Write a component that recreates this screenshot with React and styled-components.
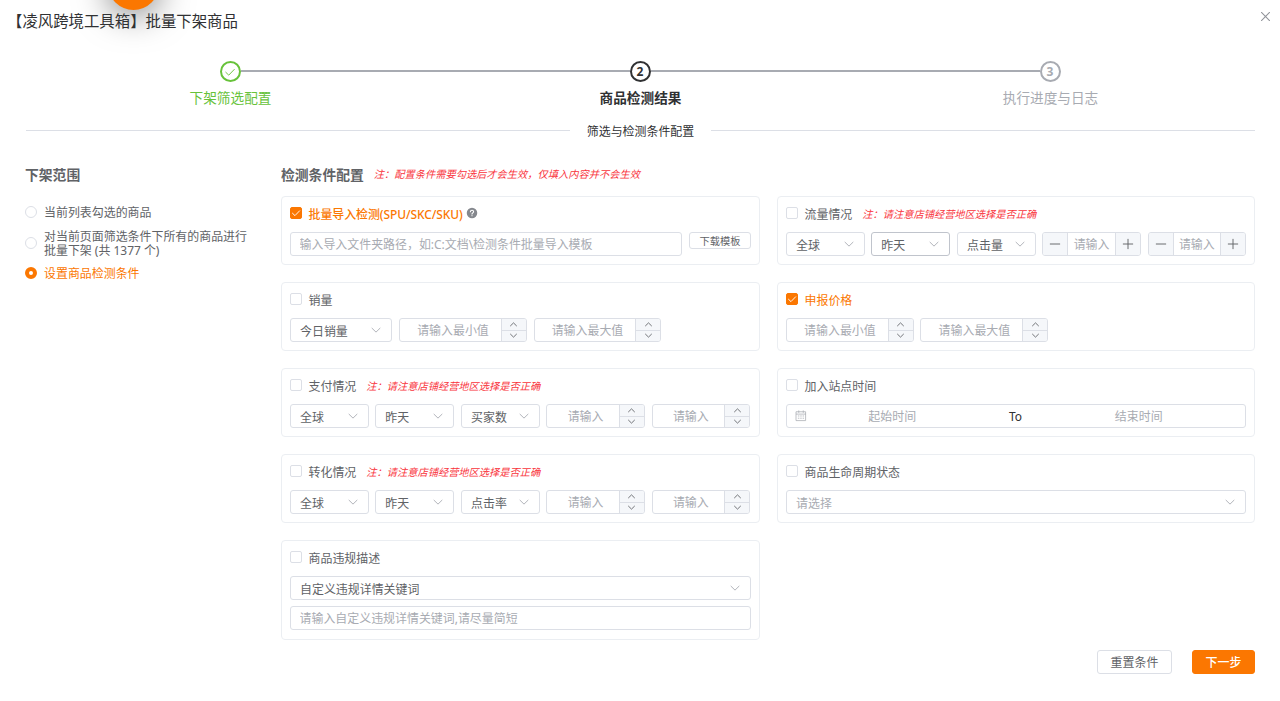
import React from 'react';
import styled, { createGlobalStyle } from 'styled-components';

const hint = '注：请注意店铺经营地区选择是否正确';

const scopes = [
  { label: '当前列表勾选的商品' },
  { label: '对当前页面筛选条件下所有的商品进行批量下架 (共 1377 个)' },
  { label: '设置商品检测条件', checked: true },
];

const Icon = ({ size = 12, width = 76, children }) => (
  <svg
    width={size}
    height={size}
    viewBox="0 0 1024 1024"
    fill="none"
    stroke="currentColor"
    strokeWidth={width}
    strokeLinecap="round"
    strokeLinejoin="round"
  >
    {children}
  </svg>
);

const ArrowDown = props => (
  <Icon {...props}>
    <path d="M171 362 512 694 853 362" />
  </Icon>
);

const ArrowUp = props => (
  <Icon {...props}>
    <path d="M171 662 512 330 853 662" />
  </Icon>
);

const Minus = () => (
  <Icon size={12} width={80}>
    <path d="M110 512H914" />
  </Icon>
);

const Plus = () => (
  <Icon size={12} width={80}>
    <path d="M110 512H914M512 110V914" />
  </Icon>
);

const Check = props => (
  <Icon {...props}>
    <path d="M150 535 406 780 880 290" />
  </Icon>
);

const Close = () => (
  <Icon size={13} width={80}>
    <path d="M195 195 829 829M829 195 195 829" />
  </Icon>
);

const Calendar = () => (
  <Icon size={12} width={64}>
    <path d="M120 150H904V904H120ZM120 350H904M320 70V210M704 70V210" />
    <path d="M280 510H340M480 510H540M680 510H740M280 700H340M480 700H540M680 700H740" />
  </Icon>
);

const Question = () => (
  <Icon size={12} width={95}>
    <circle cx="512" cy="512" r="448" fill="currentColor" stroke="none" />
    <path
      stroke="#fff"
      d="M375 405C385 235 650 240 648 405C646 500 512 500 512 605M512 735V742"
    />
  </Icon>
);

const Select = ({ value, placeholder, width, active }) => (
  <SelectBox $width={width} $active={active}>
    <SelectText $muted={!value}>{value || placeholder}</SelectText>
    <ArrowDown />
  </SelectBox>
);

const NumberInput = ({ placeholder, width }) => (
  <NumberBox $width={width}>
    <NumberField placeholder={placeholder} $shift />
    <Spinner>
      <SpinButton type="button">
        <ArrowUp size={9} width={100} />
      </SpinButton>
      <SpinButton type="button">
        <ArrowDown size={9} width={100} />
      </SpinButton>
    </Spinner>
  </NumberBox>
);

const StepInput = ({ placeholder, width }) => (
  <NumberBox $width={width}>
    <StepButton type="button">
      <Minus />
    </StepButton>
    <NumberField placeholder={placeholder} />
    <StepButton type="button" $end>
      <Plus />
    </StepButton>
  </NumberBox>
);

const Condition = ({ title, checked, strong, note, help, children }) => (
  <Card>
    <CardHead>
      <Checkbox $checked={checked}>
        {checked && <Check size={10} width={95} />}
      </Checkbox>
      <CardTitle $checked={checked} $strong={strong}>
        {title}
      </CardTitle>
      {help && (
        <Help>
          <Question />
        </Help>
      )}
      {note && <Note $left={10}>{note}</Note>}
    </CardHead>
    {children}
  </Card>
);

const App = () => {
  return (
    <Dialog>
      <GlobalStyle />
      <FloatBall />
      <Header>
        <h1>【凌风跨境工具箱】批量下架商品</h1>
        <CloseButton type="button">
          <Close />
        </CloseButton>
      </Header>

      <Steps>
        <Step $color="#67c23a">
          <StepHead>
            <StepLine $hidden />
            <StepIcon>
              <Check size={12} width={80} />
            </StepIcon>
            <StepLine />
          </StepHead>
          <StepTitle>下架筛选配置</StepTitle>
        </Step>
        <Step $color="#303133">
          <StepHead>
            <StepLine />
            <StepIcon>2</StepIcon>
            <StepLine />
          </StepHead>
          <StepTitle $bold>商品检测结果</StepTitle>
        </Step>
        <Step $color="#a8abb2">
          <StepHead>
            <StepLine />
            <StepIcon>3</StepIcon>
            <StepLine $hidden />
          </StepHead>
          <StepTitle>执行进度与日志</StepTitle>
        </Step>
      </Steps>

      <Divider>
        <span>筛选与检测条件配置</span>
      </Divider>

      <Body>
        <Scope>
          <Heading>下架范围</Heading>
          <ScopeList>
            {scopes.map(({ label, checked }) => (
              <ScopeItem key={label} $checked={checked}>
                <Radio $checked={checked} />
                <span>{label}</span>
              </ScopeItem>
            ))}
          </ScopeList>
        </Scope>

        <Conditions>
          <HeadingRow>
            <Heading>检测条件配置</Heading>
            <Note $left={10}>
              注：配置条件需要勾选后才会生效，仅填入内容并不会生效
            </Note>
          </HeadingRow>
          <Grid>
            <Condition title="批量导入检测(SPU/SKC/SKU)" checked strong help>
              <Controls>
                <TextInput placeholder="输入导入文件夹路径，如:C:文档\检测条件批量导入模板" />
                <SmallButton type="button">下载模板</SmallButton>
              </Controls>
            </Condition>
            <Condition title="流量情况" note={hint}>
              <Controls>
                <Select value="全球" width={78.5} />
                <Select value="昨天" width={79.2} active />
                <Select value="点击量" width={78.5} />
                <StepInput placeholder="请输入" width={98.6} />
                <StepInput placeholder="请输入" width={98.6} />
              </Controls>
            </Condition>
            <Condition title="销量">
              <Controls>
                <Select value="今日销量" width={102.4} />
                <NumberInput placeholder="请输入最小值" width={127.8} />
                <NumberInput placeholder="请输入最大值" width={127.8} />
              </Controls>
            </Condition>
            <Condition title="申报价格" checked>
              <Controls>
                <NumberInput placeholder="请输入最小值" width={127.8} />
                <NumberInput placeholder="请输入最大值" width={127.8} />
              </Controls>
            </Condition>
            <Condition title="支付情况" note={hint}>
              <Controls>
                <Select value="全球" width={78.5} />
                <Select value="昨天" width={79.2} />
                <Select value="买家数" width={78.5} />
                <NumberInput placeholder="请输入" width={98.6} />
                <NumberInput placeholder="请输入" width={98.6} />
              </Controls>
            </Condition>
            <Condition title="加入站点时间">
              <DateRange>
                <Calendar />
                <DateField placeholder="起始时间" />
                <span>To</span>
                <DateField placeholder="结束时间" />
              </DateRange>
            </Condition>
            <Condition title="转化情况" note={hint}>
              <Controls>
                <Select value="全球" width={78.5} />
                <Select value="昨天" width={79.2} />
                <Select value="点击率" width={78.5} />
                <NumberInput placeholder="请输入" width={98.6} />
                <NumberInput placeholder="请输入" width={98.6} />
              </Controls>
            </Condition>
            <Condition title="商品生命周期状态">
              <Select placeholder="请选择" />
            </Condition>
            <Condition title="商品违规描述">
              <Stack>
                <Select value="自定义违规详情关键词" />
                <TextInput placeholder="请输入自定义违规详情关键词,请尽量简短" />
              </Stack>
            </Condition>
          </Grid>
        </Conditions>
      </Body>

      <Footer>
        <Button type="button" $width={75}>
          重置条件
        </Button>
        <Button type="button" $width={63} $primary>
          下一步
        </Button>
      </Footer>
    </Dialog>
  );
};

const GlobalStyle = createGlobalStyle`
  * {
    box-sizing: border-box;
  }
  body {
    margin: 0;
    background: #fff;
    overflow: hidden;
  }
  body,
  button,
  input {
    font-family: 'Noto Sans', 'Noto Sans CJK SC', sans-serif;
    font-size: 11.94px;
    color: #606266;
  }
  button {
    padding: 0;
    cursor: pointer;
  }
  input {
    min-width: 0;
    padding: 0;
    border: none;
    outline: none;
    background: transparent;
  }
  input::placeholder {
    color: #a8abb2;
    opacity: 1;
  }
  svg {
    display: block;
    flex-shrink: 0;
  }
`;

const Dialog = styled.div`
  position: relative;
  width: 1280px;
  height: 701px;
  overflow: hidden;
`;

const FloatBall = styled.div`
  position: absolute;
  top: -41px;
  left: 108px;
  width: 51px;
  height: 51px;
  border-radius: 50%;
  background: #fb7701;
  box-shadow: 0 5px 34px rgba(0, 0, 0, 0.5);
`;

const Header = styled.header`
  position: relative;
  display: flex;
  justify-content: space-between;
  height: 61px;
  padding: 10px 8px 0 7px;
  h1 {
    margin: 1px 0 0;
    font-size: 15.4px;
    font-weight: 400;
    line-height: 21px;
    color: #303133;
  }
`;

const CloseButton = styled.button`
  height: 13px;
  border: none;
  background: transparent;
  color: #909399;
`;

const Steps = styled.div`
  display: flex;
  height: 59px;
  padding: 0 25px;
`;

const Step = styled.div`
  flex: 1;
  color: ${({ $color }) => $color};
`;

const StepHead = styled.div`
  display: flex;
  align-items: center;
  height: 21px;
`;

const StepLine = styled.div`
  flex: 1;
  height: 2px;
  margin-bottom: 1px;
  background: ${({ $hidden }) => ($hidden ? 'transparent' : '#a8abb2')};
`;

const StepIcon = styled.div`
  display: flex;
  align-items: center;
  justify-content: center;
  width: 21px;
  height: 21px;
  border: 1.8px solid currentColor;
  border-width: 2px;
  border-radius: 50%;
  font-size: 12px;
  font-weight: 700;
  line-height: 1;
`;

const StepTitle = styled.div`
  padding-left: 1px;
  font-size: 13.65px;
  font-weight: ${({ $bold }) => ($bold ? 700 : 400)};
  line-height: 32px;
  text-align: center;
`;

const Divider = styled.div`
  display: flex;
  align-items: center;
  gap: 17px;
  height: 21px;
  padding: 0 25px 0 26px;
  color: #303133;
  line-height: 21px;
  span {
    padding-top: 1px;
  }
  &::before,
  &::after {
    content: '';
    flex: 1;
    height: 1px;
    background: #dcdfe6;
  }
`;

const Body = styled.div`
  display: flex;
  justify-content: space-between;
  padding: 23px 25px 0;
`;

const Scope = styled.section`
  width: 230px;
`;

const Heading = styled.h3`
  margin: 0;
  font-size: 13.8px;
  font-weight: 700;
  line-height: 21px;
  color: #606266;
`;

const ScopeList = styled.div`
  display: flex;
  flex-direction: column;
  gap: 10px;
  margin-top: 20px;
`;

const ScopeItem = styled.label`
  display: flex;
  align-items: center;
  gap: 7px;
  min-height: 14px;
  line-height: 13.6px;
  color: ${({ $checked }) => ($checked ? '#fb7701' : '#606266')};
  span {
    width: 206px;
    margin: 1px 0 -1px;
  }
`;

const Radio = styled.i`
  flex-shrink: 0;
  width: 12px;
  height: 12px;
  border: ${({ $checked }) =>
    $checked ? '4px solid #fb7701' : '1px solid #dcdfe6'};
  border-radius: 50%;
  background: #fff;
`;

const Conditions = styled.section`
  width: 974px;
`;

const HeadingRow = styled.div`
  display: flex;
  height: 32px;
`;

const Note = styled.em`
  margin-left: ${({ $left }) => $left}px;
  padding-top: 1px;
  font-size: 10.24px;
  line-height: 18px;
  color: #f9343c;
`;

const Grid = styled.div`
  display: grid;
  grid-template-columns: 479px 478px;
  gap: 17px;
`;

const Card = styled.div`
  padding: 9px 8px 8px;
  border: 1px solid #ebeef2;
  border-radius: 4px;
`;

const CardHead = styled.div`
  display: flex;
  align-items: center;
  height: 14px;
  margin-bottom: 12px;
  line-height: 14px;
`;

const Checkbox = styled.i`
  display: flex;
  align-items: center;
  justify-content: center;
  width: 12px;
  height: 12px;
  border: 1px solid ${({ $checked }) => ($checked ? '#fb7701' : '#dcdfe6')};
  border-radius: 2px;
  background: ${({ $checked }) => ($checked ? '#fb7701' : '#fff')};
  color: #fff;
`;

const CardTitle = styled.span`
  margin-left: 6.5px;
  padding-top: 2px;
  font-weight: ${({ $strong }) => ($strong ? 500 : 400)};
  letter-spacing: ${({ $strong }) => ($strong ? '-0.06px' : 'normal')};
  color: ${({ $checked }) => ($checked ? '#fb7701' : '#606266')};
`;

const Help = styled.i`
  margin-left: 3px;
  color: #85888e;
`;

const Controls = styled.div`
  display: flex;
  gap: 6.7px;
`;

const Stack = styled.div`
  display: flex;
  flex-direction: column;
  gap: 6px;
  padding-bottom: 1px;
`;

const TextInput = styled.input.attrs({ type: 'text' })`
  && {
    flex: 1 0 24px;
    height: 24px;
    padding: 0 8.5px;
    border: 1px solid #dcdfe6;
    border-radius: 3px;
  }
`;

const SmallButton = styled.button`
  width: 62px;
  height: 17px;
  padding-top: 1px;
  border: 1px solid #dcdfe6;
  border-radius: 3px;
  background: #fff;
  font-size: 10.24px;
  line-height: 14px;
`;

const SelectBox = styled.div`
  display: flex;
  align-items: center;
  justify-content: space-between;
  flex-shrink: 0;
  width: ${({ $width }) => ($width ? `${$width}px` : '100%')};
  height: 24px;
  padding: 0 9px;
  border: 1px solid ${({ $active }) => ($active ? '#c0c4cc' : '#dcdfe6')};
  border-radius: 3px;
  color: #a8abb2;
`;

const SelectText = styled.span`
  padding-top: 2px;
  line-height: 20px;
  color: ${({ $muted }) => ($muted ? '#a8abb2' : '#606266')};
`;

const NumberBox = styled.div`
  display: flex;
  flex-shrink: 0;
  width: ${({ $width }) => $width}px;
  height: 24px;
  border: 1px solid #dcdfe6;
  border-radius: 3px;
  overflow: hidden;
`;

const NumberField = styled.input.attrs({ type: 'text' })`
  && {
    flex: 1;
    padding-left: ${({ $shift }) => ($shift ? 5 : 0)}px;
    text-align: center;
  }
`;

const Spinner = styled.div`
  display: flex;
  flex-direction: column;
  width: 25px;
  border-left: 1px solid #dcdfe6;
`;

const SpinButton = styled.button`
  display: flex;
  align-items: center;
  justify-content: center;
  flex: 1;
  border: none;
  background: #f5f7fa;
  & + & {
    border-top: 1px solid #dcdfe6;
  }
`;

const StepButton = styled.button`
  display: flex;
  align-items: center;
  justify-content: center;
  width: 25px;
  border: solid #dcdfe6;
  border-width: ${({ $end }) => ($end ? '0 0 0 1px' : '0 1px 0 0')};
  background: #f5f7fa;
`;

const DateRange = styled.div`
  display: flex;
  align-items: center;
  height: 24px;
  padding: 0 16px 0 8px;
  border: 1px solid #dcdfe6;
  border-radius: 3px;
  color: #a8abb2;
  svg {
    margin-right: -5px;
  }
  span {
    width: 66px;
    text-align: center;
    color: #303133;
  }
`;

const DateField = styled.input.attrs({ type: 'text' })`
  && {
    flex: 1;
    text-align: center;
  }
`;

const Footer = styled.footer`
  display: flex;
  justify-content: flex-end;
  gap: 20px;
  padding: 10px 25px 0;
`;

const Button = styled.button`
  width: ${({ $width }) => $width}px;
  height: 24px;
  padding-top: 1px;
  border: 1px solid ${({ $primary }) => ($primary ? '#fb7701' : '#dcdfe6')};
  border-radius: 3px;
  background: ${({ $primary }) => ($primary ? '#fb7701' : '#fff')};
  color: ${({ $primary }) => ($primary ? '#fff' : '#606266')};
  font-weight: ${({ $primary }) => ($primary ? 500 : 400)};
  line-height: 21px;
`;

export default App;
